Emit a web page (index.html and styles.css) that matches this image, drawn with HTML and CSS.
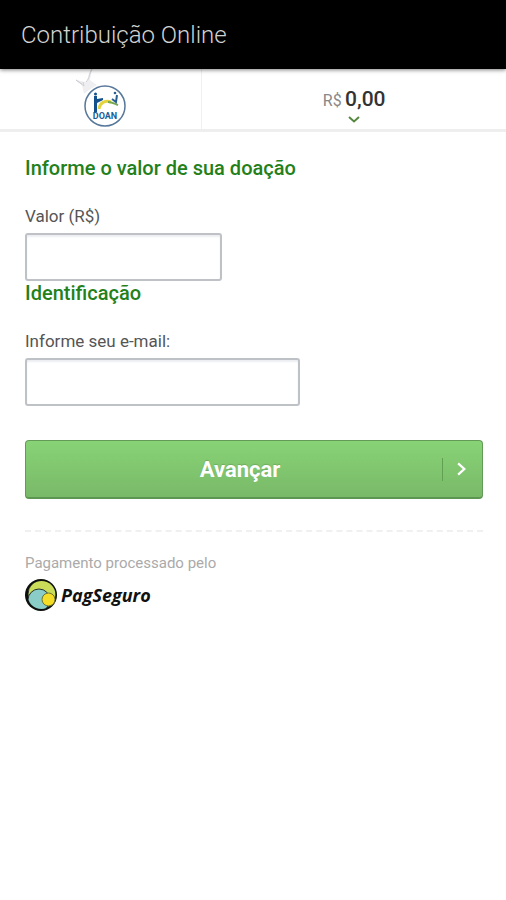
FILE: index.html
```html
<!DOCTYPE html>
<html lang="pt-BR">
<head>
<meta charset="utf-8">
<meta name="viewport" content="width=device-width, initial-scale=1">
<title>Contribuição Online</title>
<link rel="stylesheet" href="styles.css">
</head>
<body>
<header class="app-bar">
  <h1 class="app-title">Contribuição Online</h1>
</header>
<div class="summary">
  <div class="brand">
    <svg class="brand-logo" viewBox="0 0 54 60" role="img" aria-label="DOAN">
      <path d="M20 0 C15 5 17 9 14 13 L4 11 L10 16 L12 25 L17 21 L25 16 L18 11 Z" fill="#efeff2"/>
      <path d="M20 0 C17 5 18 9 14 13 M4 11 L12 17 L11 13 M4 11 L10 15" fill="none" stroke="#cfcfd6"/>
      <circle cx="33" cy="37" r="20" fill="#fff" stroke="#56779a" stroke-width="1.5"/>
      <path d="M22 27 H25 V30 L31 29 V31 L25 34 V43 H22 Z" fill="#14508b"/>
      <circle cx="23.5" cy="25" r="1.5" fill="#14508b"/>
      <path d="M27 40 C28 33 34 31 39 33" fill="none" stroke="#e4d33c" stroke-width="3"/>
      <path d="M36 33 C40 33 43 35 46 36" fill="none" stroke="#77a850" stroke-width="2"/>
      <path d="M40 30 L44 33 L45 26" fill="none" stroke="#285e91" stroke-width="2"/>
      <circle cx="43" cy="24" r="1.3" fill="#285e91"/>
      <text class="brand-name" x="33" y="50" text-anchor="middle">DOAN</text>
    </svg>
  </div>
  <button class="total" type="button">
    <span class="total-line"><span class="currency">R$</span> <span class="amount">0,00</span></span>
    <svg class="total-arrow" viewBox="0 0 12 7" aria-hidden="true"><path d="M1 1 L6 5.5 L11 1"/></svg>
  </button>
</div>
<main class="content">
  <form class="form">
    <h2 class="section-title">Informe o valor de sua doação</h2>
    <label class="label" for="value">Valor (R$)</label>
    <input class="field field-value" id="value" type="text" inputmode="decimal">
    <h2 class="section-title">Identificação</h2>
    <label class="label" for="email">Informe seu e-mail:</label>
    <input class="field field-email" id="email" type="email">
    <button class="submit" type="submit">
      <span class="submit-text">Avançar</span>
      <span class="submit-icon">
        <svg class="submit-arrow" viewBox="0 0 8 12" aria-hidden="true"><path d="M1 1 L6.5 6 L1 11"/></svg>
      </span>
    </button>
  </form>
  <footer class="footer">
    <p class="processed">Pagamento processado pelo</p>
    <div class="provider">
      <svg class="provider-logo" viewBox="0 0 32 32" aria-hidden="true">
        <defs><clipPath id="disc"><circle cx="16.5" cy="16" r="14"/></clipPath></defs>
        <circle cx="16" cy="16" r="16" fill="#0c0f0c"/>
        <g clip-path="url(#disc)" stroke="#26302a">
          <circle cx="17" cy="15" r="14" fill="#cbdc58"/>
          <circle cx="14" cy="21" r="11" fill="#8accc8"/>
        </g>
        <circle cx="23.5" cy="20.5" r="6.5" fill="#f4dc27" stroke="#6e7331"/>
      </svg>
      <span class="provider-name">PagSeguro</span>
    </div>
  </footer>
</main>
</body>
</html>
```
FILE: styles.css
```css
* {
  box-sizing: border-box;
}

body {
  margin: 0;
  background: #fff;
  color: #555;
  font-family: Roboto, "Liberation Sans", sans-serif;
}

h1,
h2,
p {
  margin: 0;
}

.app-bar {
  position: relative;
  padding: 21px 21px 20px;
  background: #000;
  box-shadow: 0 1px 4px rgba(0, 0, 0, 0.5);
}

.app-title {
  color: #d2d2d2;
  font-size: 24px;
  font-weight: 300;
  line-height: 28px;
}

.summary {
  display: grid;
  grid-template-columns: 2fr 3fr;
  border-bottom: 3px solid #eee;
}

.brand {
  height: 60px;
  padding-left: 72px;
  border-right: 1px solid #f0f0f0;
}

.brand-logo {
  display: block;
  width: 54px;
  height: 60px;
}

.brand-name {
  fill: #225c96;
  font-size: 9px;
  font-weight: 700;
}

.total {
  display: flex;
  flex-direction: column;
  align-items: center;
  padding: 18px 0 0;
  border: 0;
  background: none;
  font-family: inherit;
}

.total-line {
  line-height: 24px;
}

.currency {
  color: #888;
  font-size: 16px;
}

.amount {
  color: #333;
  font-size: 21px;
  font-weight: 500;
}

.total-arrow {
  width: 12px;
  height: 7px;
  margin-top: 2px;
  fill: none;
  stroke: #55883f;
  stroke-width: 2;
}

.content {
  padding: 24px 23px 24px 25px;
}

.form {
  display: flex;
  flex-direction: column;
  align-items: flex-start;
}

.section-title {
  margin-bottom: 24px;
  color: #23801a;
  font-size: 20px;
  font-weight: 500;
  line-height: 24px;
}

.label {
  margin-bottom: 5px;
  color: #555;
  font-size: 17px;
  line-height: 24px;
}

.field {
  height: 48px;
  max-width: 100%;
  padding: 0 12px;
  border: 2px solid #bec2c6;
  border-radius: 3px;
  background: #fff;
  box-shadow: inset 0 2px 2px #eceef2;
  font: inherit;
}

.field-value {
  width: 197px;
}

.field-email {
  width: 275px;
}

.submit {
  display: flex;
  align-items: center;
  width: 100%;
  height: 59px;
  margin-top: 34px;
  padding: 0;
  border: 1px solid #629b56;
  border-bottom: 2px solid #5d9651;
  border-radius: 4px;
  background: linear-gradient(#88d376, #79b968);
  color: #fff;
  font-family: inherit;
  font-size: 22px;
  font-weight: 700;
}

.submit-text {
  flex: 1;
  padding-left: 12px;
  text-shadow: 0 -1px 1px rgba(0, 0, 0, 0.15);
}

.submit-icon {
  display: flex;
  align-items: center;
  width: 40px;
  height: 23px;
  padding-left: 14px;
  border-left: 1px solid #61a052;
}

.submit-arrow {
  width: 9px;
  height: 14px;
  fill: none;
  stroke: #fff;
  stroke-width: 2;
}

.footer {
  margin-top: 31px;
  padding-top: 21px;
  border-top: 2px dashed #f0f0f0;
}

.processed {
  color: #aaa;
  font-size: 15px;
  line-height: 20px;
}

.provider {
  display: flex;
  align-items: center;
  gap: 4px;
  margin-top: 6px;
}

.provider-logo {
  width: 32px;
  height: 32px;
}

.provider-name {
  color: #111;
  font-family: "Open Sans", "Noto Sans", sans-serif;
  font-size: 18px;
  font-style: italic;
  font-weight: 700;
  line-height: 32px;
}
```
